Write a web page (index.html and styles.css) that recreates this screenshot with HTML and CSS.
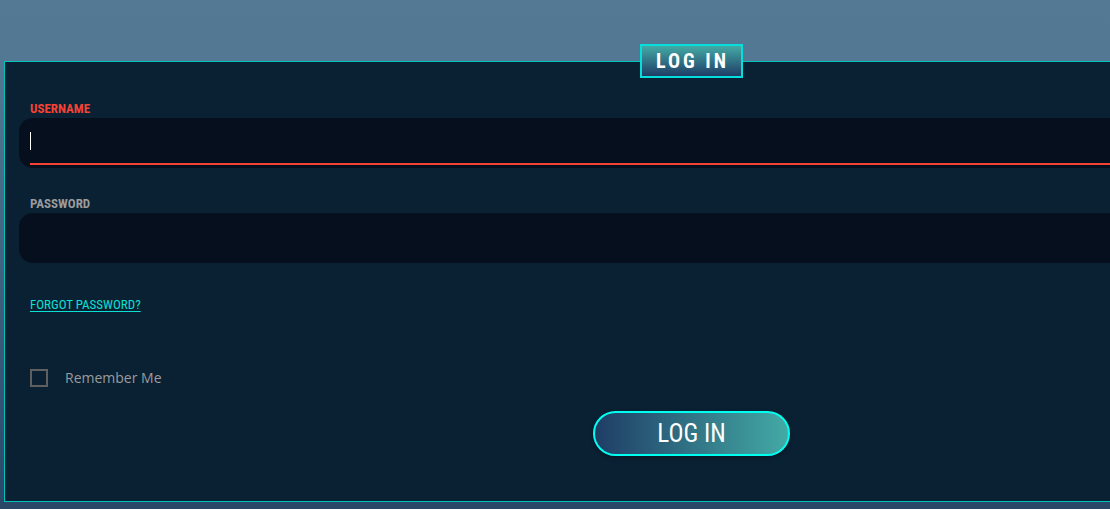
FILE: index.html
```html
<!DOCTYPE html>
<html lang="en">
<head>
<meta charset="utf-8">
<title>Log In</title>
<link rel="stylesheet" href="styles.css">
</head>
<body>
<form class="panel">
  <h1 class="panel-title">LOG IN</h1>
  <div class="group">
    <label class="label label-error" for="username">USERNAME</label>
    <div class="field">
      <input class="input input-error" id="username" type="text">
      <span class="caret"></span>
    </div>
  </div>
  <div class="group">
    <label class="label" for="password">PASSWORD</label>
    <div class="field">
      <input class="input" id="password" type="password">
    </div>
  </div>
  <a class="forgot" href="#">FORGOT PASSWORD?</a>
  <label class="remember" for="remember">
    <input class="checkbox" id="remember" type="checkbox">
    Remember Me
  </label>
  <button class="submit" type="submit">LOG IN</button>
</form>
</body>
</html>
```
FILE: styles.css
```css
* {
  box-sizing: border-box;
}

html {
  min-height: 100%;
  background: linear-gradient(#537995 0, #537894 60px, #2b4767 100%);
}

body {
  margin: 0;
  padding: 44px 0 7px 4px;
  overflow: hidden;
  font-family: "Roboto Condensed", "Liberation Sans Narrow", "Liberation Sans", sans-serif;
}

/* The panel runs wider than the window and is cut off at the right. */
.panel {
  display: flex;
  flex-direction: column;
  align-items: stretch;
  margin: 17px -269px 0 0;
  padding: 0 14px 45px;
  border: 1px solid #00c3bd;
  background: #0a2033;
}

.panel-title {
  align-self: center;
  margin: -18px 0 22px;
  padding: 0 12px 0 14px;
  border: 2px solid #06dedb;
  background: linear-gradient(#43aaa5, #1f3d66);
  color: #fff;
  font-size: 20px;
  font-weight: 700;
  line-height: 30px;
  letter-spacing: 3px;
}

.group {
  display: flex;
  flex-direction: column;
  margin-bottom: 27px;
}

.label {
  padding-left: 11px;
  color: #9b9b9b;
  font-size: 13px;
  font-weight: 700;
  line-height: 18px;
}

.label-error {
  color: #f44336;
}

.field {
  position: relative;
  height: 50px;
  padding: 0 11px 3px;
  border-radius: 14px;
  background: #060f1d;
}

.input {
  display: block;
  width: 100%;
  height: 47px;
  padding: 0;
  border: 0;
  border-bottom: 2px solid transparent;
  outline: 0;
  background: transparent;
  color: #fff;
  font: 16px "Open Sans", sans-serif;
  caret-color: #fff;
}

.input-error {
  border-bottom-color: #f44336;
}

.caret {
  position: absolute;
  top: 14px;
  left: 11px;
  width: 1px;
  height: 18px;
  background: #fff;
}

.forgot {
  align-self: flex-start;
  margin: 5px 0 0 11px;
  color: #0be0d4;
  font-size: 13px;
  line-height: 20px;
  text-underline-offset: 2px;
}

.remember {
  display: flex;
  align-items: center;
  align-self: flex-start;
  gap: 17px;
  margin: 53px 0 0 11px;
  color: #9b9b9b;
  font: 14px/20px "Open Sans", sans-serif;
}

.checkbox {
  appearance: none;
  width: 18px;
  height: 18px;
  margin: 0;
  border: 2px solid #5f5f5f;
}

.submit {
  align-self: center;
  width: 197px;
  height: 45px;
  margin-top: 23px;
  padding: 0;
  border: 2px solid #00fff0;
  border-radius: 23px;
  background: linear-gradient(90deg, #1f3d66, #43aaa5);
  box-shadow: 0 2px 4px rgba(0, 0, 0, 0.25);
  color: #fff;
  font-family: inherit;
  font-size: 25px;
}
```
